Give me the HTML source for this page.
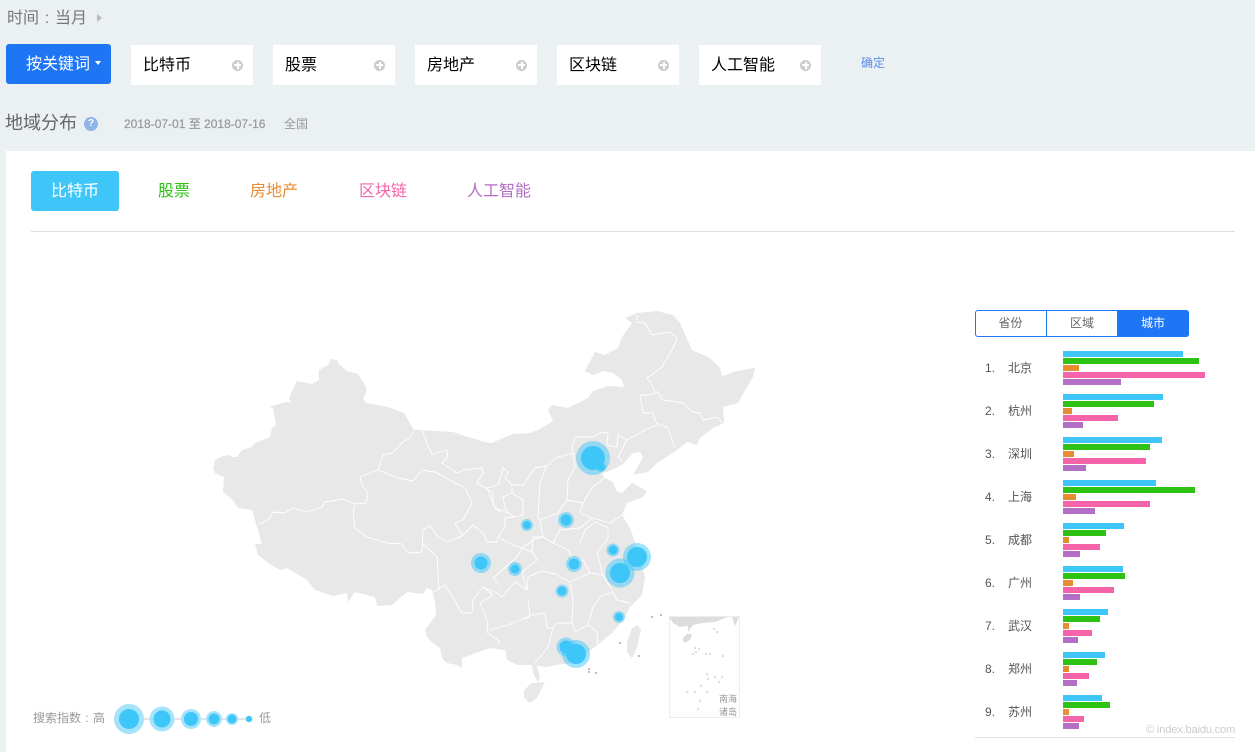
<!DOCTYPE html>
<html lang="zh-CN"><head><meta charset="utf-8"><title>地域分布</title>
<style>
*{box-sizing:border-box}
html,body{margin:0;padding:0}
body{width:1255px;height:752px;overflow:hidden;background:#ebf0f3;position:relative;font-family:"Liberation Sans","Noto Sans CJK SC",sans-serif;color:#666}
.a{position:absolute;white-space:nowrap}
.cl{display:inline-block;width:1em;text-align:center}
.kw{position:absolute;top:45px;width:122px;height:40px;background:#fff;color:#000;font-size:16px;line-height:42px;padding-left:12px}
.kw i{position:absolute;left:101px;top:14.5px;width:11px;height:11px;border-radius:50%;background:#ccc}
.kw i:before{content:"";position:absolute;left:2px;top:4.5px;width:7px;height:2px;background:#fff}
.kw i:after{content:"";position:absolute;left:4.5px;top:2px;width:2px;height:7px;background:#fff}
.tab{position:absolute;top:171px;height:40px;line-height:41px;font-size:16px}
.seg{position:absolute;top:310px;height:27px;line-height:26px;font-size:12px;text-align:center;color:#666}
.row{position:absolute;left:0;width:1255px;height:41px}
.row b{position:absolute;left:1063px;height:6px;display:block}
.row span{position:absolute;font-size:12px;color:#555;line-height:16px;top:9px}
.c1{top:0;background:#3ec6f8}.c2{top:7px;background:#2dc214}.c3{top:14px;background:#e98b30}.c4{top:21px;background:#f564a8}.c5{top:28px;background:#b36fc6}
.map{filter:blur(.35px)}
</style></head><body>
<div class="a" style="left:7px;top:8px;font-size:16px;line-height:22px;color:#777">时间<span class="cl">:</span>当月</div>
<div class="a" style="left:97px;top:14px;width:0;height:0;border-left:5px solid #bbb;border-top:4.5px solid transparent;border-bottom:4.5px solid transparent"></div>

<div class="a" style="left:6px;top:44px;width:105px;height:40px;background:#1f76f5;border-radius:3px;color:#fff;font-size:16px;line-height:41px;padding-left:20px">按关键词</div>
<div class="a" style="left:95px;top:61px;width:0;height:0;border-top:4px solid #fff;border-left:3px solid transparent;border-right:3px solid transparent"></div>

<div class="kw" style="left:131px">比特币<i></i></div>
<div class="kw" style="left:273px">股票<i></i></div>
<div class="kw" style="left:415px">房地产<i></i></div>
<div class="kw" style="left:557px">区块链<i></i></div>
<div class="kw" style="left:699px">人工智能<i></i></div>
<div class="a" style="left:861px;top:55px;font-size:12px;line-height:17px;color:#5b8def">确定</div>

<div class="a" style="left:5px;top:110px;font-size:18px;line-height:26px;color:#666">地域分布</div>
<div class="a" style="left:84px;top:117px;width:14px;height:14px;border-radius:50%;background:#8fb4e8;color:#fff;font-size:10px;font-weight:bold;line-height:14px;text-align:center">?</div>
<div class="a" style="left:124px;top:116px;font-size:12px;line-height:17px;color:#999;-webkit-text-stroke:.25px #999">2018-07-01 至 2018-07-16</div>
<div class="a" style="left:284px;top:116px;font-size:12px;line-height:17px;color:#999">全国</div>

<div class="a" style="left:6px;top:151px;width:1249px;height:601px;background:#fff"></div>

<div class="tab" style="left:31px;width:88px;background:#3ec6f8;border-radius:3px;color:#fff;padding-left:20px">比特币</div>
<div class="tab" style="left:158px;color:#2dc214">股票</div>
<div class="tab" style="left:250px;color:#e98b30">房地产</div>
<div class="tab" style="left:359px;color:#f564a8">区块链</div>
<div class="tab" style="left:467px;color:#b36fc6">人工智能</div>
<div class="a" style="left:31px;top:231px;width:1204px;height:1px;background:#ddd"></div>

<svg class="a" style="left:0;top:0" width="1255" height="752" viewBox="0 0 1255 752">
<g class="map">
<g fill="#e8e8e8">
<path d="M213 468L215 460L223 456L229 455L232 457L237 457L242 450L252 447L255 443L270 437L272 428L276 425L273 408L269 407L285 402L291 402L289 398L297 381L312 384L319 380L319 370L328 365L331 359L337 360L338 363L347 371L358 374L366 387L366 393L363 398L366 403L388 407L404 413L414 430L422 430L453 432L465 436L485 442L492 443L512 434L530 433L538 430L553 421L548 410L552 405L568 408L588 398L593 391L608 386L624 387L622 380L613 373L603 371L593 375L585 371L595 352L605 355L618 348L622 337L632 323L625 318L637 313L657 311L673 315L680 323L692 350L710 358L720 368L722 376L737 371L755 368L753 377L747 387L738 403L723 407L724 423L713 428L700 438L697 445L687 442L677 450L657 463L648 472L637 474L633 475L643 457L640 452L633 453L622 465L607 472L602 473L605 478L613 482L617 492L622 493L632 483L647 491L643 497L627 503L622 515L630 528L638 550L645 577L642 595L630 607L623 620L613 632L600 643L587 653L573 663L557 665L547 667L537 666L540 677L538 682L533 673L532 665L517 665L507 660L505 650L490 648L470 655L462 658L462 668L457 665L447 663L442 658L440 648L433 643L427 637L425 630L436 615L435 602L432 590L427 588L423 594L407 592L392 605L377 606L375 597L355 592L348 602L347 593L333 596L315 590L307 580L287 568L280 570L268 563L258 555L255 544L262 544L257 527L252 510L238 508L233 500L223 492L224 477L215 473Z"/>
<path d="M524 690L532 683L545 682L540 692L537 698L530 703L524 698Z"/>
<path d="M627 642L632 628L638 625L641 630L637 647L632 658L627 652Z"/>
</g>
<g fill="none" stroke="#fff" stroke-width=".9" stroke-linejoin="round">
<path d="M258 525L268 520L273 512L285 513L292 508L307 512L322 507L325 502L343 499L355 504L366 503L368 493L362 485L360 477L378 470L383 455L392 453L403 442L410 438L413 432"/>
<path d="M378 470L398 478L413 481L422 470L435 472L448 479L465 488L472 503L463 520L455 523L462 535"/>
<path d="M355 504L353 513L355 528L367 537L387 543L402 544L407 552L413 553L422 552L423 530L430 526L438 537L447 542L460 537L463 535L473 525L483 533L487 542L497 542L498 537"/>
<path d="M422 543L437 557L439 590"/>
<path d="M433 592L445 585L462 613L472 613L473 600L483 587L497 593L502 597L515 582L527 590L522 572L537 560L532 552L522 548L517 557L508 565L493 578L500 585"/>
<path d="M483 587L493 595L480 603L488 623L487 632L500 642L498 645"/>
<path d="M490 630L508 625L532 615L545 613L547 628L553 628L548 647L535 663"/>
<path d="M528 600L530 617L523 619M527 590L528 577L542 571L555 574L570 582L573 600L572 623L557 623L553 628"/>
<path d="M572 623L575 632L588 625L597 632L598 644M588 625L593 607L600 597L613 592L617 600L630 603"/>
<path d="M570 582L590 573L603 575L613 592"/>
<path d="M532 552L533 537L543 537L553 543L568 550L573 560L583 560L590 573"/>
<path d="M580 543L585 530L595 522L608 528L608 538L597 553L603 575"/>
<path d="M540 520L538 518L540 483L546 467L555 458L573 453"/>
<path d="M567 500L568 480L575 467L573 453M540 520L558 513L567 500L583 503L580 513"/>
<path d="M540 520L543 537L533 540L522 548L513 545L498 537L505 527L505 518L515 517"/>
<path d="M487 488L498 485L503 468L508 472L505 478L512 485L523 485L535 468L546 466"/>
<path d="M487 488L495 508L508 513L515 517L523 515L523 500L512 493L503 497L505 507L508 513M512 485L512 493"/>
<path d="M580 513L592 518L610 523L622 515M583 503L592 488L605 477"/>
<path d="M543 537L553 543L560 530L580 528L592 518"/>
<path d="M640 395L643 413L653 413L657 425L645 430L627 440L618 435L617 447L607 445L608 433L602 432L593 437L575 437L572 447L573 453"/>
<path d="M627 440L618 457L623 462"/>
<path d="M657 423L668 428L675 448"/>
<path d="M658 392L663 400L683 403L693 412L700 413L703 420L717 417L723 423"/>
<path d="M640 395L650 395L658 392L655 392L653 387L647 378L662 367L672 350L677 338L670 332L652 335L645 323L637 322L637 315"/>
<path d="M422 430L427 443L432 454L447 450L448 457L442 463L457 473L463 470L482 468L483 473L477 483L487 489L493 492L493 505L500 512"/>
</g>
<g fill="#aaa">
<circle cx="652" cy="617" r="1"/><circle cx="661" cy="615" r="1"/><circle cx="620" cy="643" r="1"/><circle cx="639" cy="656" r="1"/><circle cx="589" cy="669" r="1"/><circle cx="589" cy="672" r="1"/><circle cx="596" cy="673" r="1"/>
</g>
<rect x="669.5" y="616.5" width="70" height="101" fill="#fff" stroke="#eee"/>
<path d="M669 617L728 617L715 622L703 623L693 625L688 632L688 626L680 627L673 623Z" fill="#ddd"/>
<path d="M732 617L739 617L735 626Z" fill="#ddd"/>
<path d="M683 638L687 634L692 634L690 640L685 643L683 641Z" fill="#ddd"/>
<g fill="#ddd">
<circle cx="695" cy="648" r="1.2"/><circle cx="699" cy="649" r="1.2"/><circle cx="696" cy="652" r="1.2"/><circle cx="693" cy="654" r="1.2"/><circle cx="706" cy="654" r="1.2"/><circle cx="710" cy="654" r="1.2"/><circle cx="723" cy="656" r="1.2"/><circle cx="707" cy="674" r="1.2"/><circle cx="708" cy="679" r="1.2"/><circle cx="715" cy="677" r="1.2"/><circle cx="722" cy="677" r="1.2"/><circle cx="719" cy="682" r="1.2"/><circle cx="701" cy="686" r="1.2"/><circle cx="687" cy="692" r="1.2"/><circle cx="695" cy="692" r="1.2"/><circle cx="707" cy="692" r="1.2"/><circle cx="700" cy="701" r="1.2"/><circle cx="698" cy="709" r="1.2"/><circle cx="714" cy="629" r="1.2"/><circle cx="717" cy="632" r="1.2"/>
</g>
</g>
<text x="719" y="702" font-size="9" fill="#999" font-family="'Liberation Sans','Noto Sans CJK SC',sans-serif">南海</text>
<text x="719" y="715" font-size="9" fill="#999" font-family="'Liberation Sans','Noto Sans CJK SC',sans-serif">诸岛</text>
<g fill="#3ec6f8" fill-opacity=".5">
<circle cx="593" cy="458" r="17"/><circle cx="566" cy="520" r="8"/><circle cx="527" cy="525" r="6"/><circle cx="481" cy="563" r="10"/><circle cx="515" cy="569" r="7"/><circle cx="574" cy="564" r="8"/><circle cx="613" cy="550" r="6.5"/><circle cx="637" cy="557" r="14"/><circle cx="620" cy="573" r="14.5"/><circle cx="562" cy="591" r="6.5"/><circle cx="619" cy="617" r="6"/><circle cx="566" cy="647" r="9.5"/><circle cx="576" cy="654" r="14"/>
</g>
<g fill="#3ec6f8">
<circle cx="593" cy="458" r="12"/><circle cx="601" cy="467" r="4.5"/><circle cx="566" cy="520" r="5.5"/><circle cx="527" cy="525" r="4"/><circle cx="481" cy="563" r="6.5"/><circle cx="515" cy="569" r="4.5"/><circle cx="574" cy="564" r="5.5"/><circle cx="613" cy="550" r="4.5"/><circle cx="637" cy="557" r="10"/><circle cx="620" cy="573" r="10"/><circle cx="562" cy="591" r="4.5"/><circle cx="619" cy="617" r="4"/><circle cx="566" cy="647" r="6.5"/><circle cx="576" cy="654" r="10"/>
</g>
<rect x="129" y="718" width="120" height="2" fill="#e5e5e5"/>
<g fill="#a5e3fb">
<circle cx="129" cy="719" r="15"/><circle cx="162" cy="719" r="12.5"/><circle cx="191" cy="719" r="10"/><circle cx="214" cy="719" r="8"/><circle cx="232" cy="719" r="6"/><circle cx="249" cy="719" r="3.5"/>
</g>
<g fill="#3ec6f8">
<circle cx="129" cy="719" r="10"/><circle cx="162" cy="719" r="8.5"/><circle cx="191" cy="719" r="7"/><circle cx="214" cy="719" r="5.5"/><circle cx="232" cy="719" r="4.5"/><circle cx="249" cy="719" r="3"/>
</g>
</svg>

<div class="a" style="left:33px;top:710px;font-size:12px;line-height:17px;color:#999">搜索指数<span class="cl">:</span>高</div>
<div class="a" style="left:259px;top:710px;font-size:12px;line-height:17px;color:#999">低</div>

<div class="a" style="left:975px;top:310px;width:214px;height:27px;border:1px solid #1f76f5;border-radius:3px"></div>
<div class="a" style="left:1046px;top:310px;width:1px;height:27px;background:#1f76f5"></div>
<div class="a" style="left:1117px;top:310px;width:72px;height:27px;background:#1f76f5;border-radius:0 3px 3px 0"></div>
<div class="seg" style="left:975px;width:71px">省份</div>
<div class="seg" style="left:1047px;width:70px">区域</div>
<div class="seg" style="left:1117px;width:72px;color:#fff">城市</div>

<div class="row" style="top:351px"><span style="left:985px">1.</span><span style="left:1008px">北京</span><b class="c1" style="width:120px"></b><b class="c2" style="width:136px"></b><b class="c3" style="width:16px"></b><b class="c4" style="width:142px"></b><b class="c5" style="width:58px"></b></div>
<div class="row" style="top:394px"><span style="left:985px">2.</span><span style="left:1008px">杭州</span><b class="c1" style="width:100px"></b><b class="c2" style="width:91px"></b><b class="c3" style="width:9px"></b><b class="c4" style="width:55px"></b><b class="c5" style="width:20px"></b></div>
<div class="row" style="top:437px"><span style="left:985px">3.</span><span style="left:1008px">深圳</span><b class="c1" style="width:99px"></b><b class="c2" style="width:87px"></b><b class="c3" style="width:11px"></b><b class="c4" style="width:83px"></b><b class="c5" style="width:23px"></b></div>
<div class="row" style="top:480px"><span style="left:985px">4.</span><span style="left:1008px">上海</span><b class="c1" style="width:93px"></b><b class="c2" style="width:132px"></b><b class="c3" style="width:13px"></b><b class="c4" style="width:87px"></b><b class="c5" style="width:32px"></b></div>
<div class="row" style="top:523px"><span style="left:985px">5.</span><span style="left:1008px">成都</span><b class="c1" style="width:61px"></b><b class="c2" style="width:43px"></b><b class="c3" style="width:6px"></b><b class="c4" style="width:37px"></b><b class="c5" style="width:17px"></b></div>
<div class="row" style="top:566px"><span style="left:985px">6.</span><span style="left:1008px">广州</span><b class="c1" style="width:60px"></b><b class="c2" style="width:62px"></b><b class="c3" style="width:10px"></b><b class="c4" style="width:51px"></b><b class="c5" style="width:17px"></b></div>
<div class="row" style="top:609px"><span style="left:985px">7.</span><span style="left:1008px">武汉</span><b class="c1" style="width:45px"></b><b class="c2" style="width:37px"></b><b class="c3" style="width:6px"></b><b class="c4" style="width:29px"></b><b class="c5" style="width:15px"></b></div>
<div class="row" style="top:652px"><span style="left:985px">8.</span><span style="left:1008px">郑州</span><b class="c1" style="width:42px"></b><b class="c2" style="width:34px"></b><b class="c3" style="width:6px"></b><b class="c4" style="width:26px"></b><b class="c5" style="width:14px"></b></div>
<div class="row" style="top:695px"><span style="left:985px">9.</span><span style="left:1008px">苏州</span><b class="c1" style="width:39px"></b><b class="c2" style="width:47px"></b><b class="c3" style="width:6px"></b><b class="c4" style="width:21px"></b><b class="c5" style="width:16px"></b></div>

<div class="a" style="left:1146px;top:723px;font-size:11px;line-height:14px;color:#ccc;letter-spacing:-.12px">© index.baidu.com</div>
<div class="a" style="left:975px;top:737px;width:260px;height:1px;background:#e2e2e2"></div>
</body></html>
